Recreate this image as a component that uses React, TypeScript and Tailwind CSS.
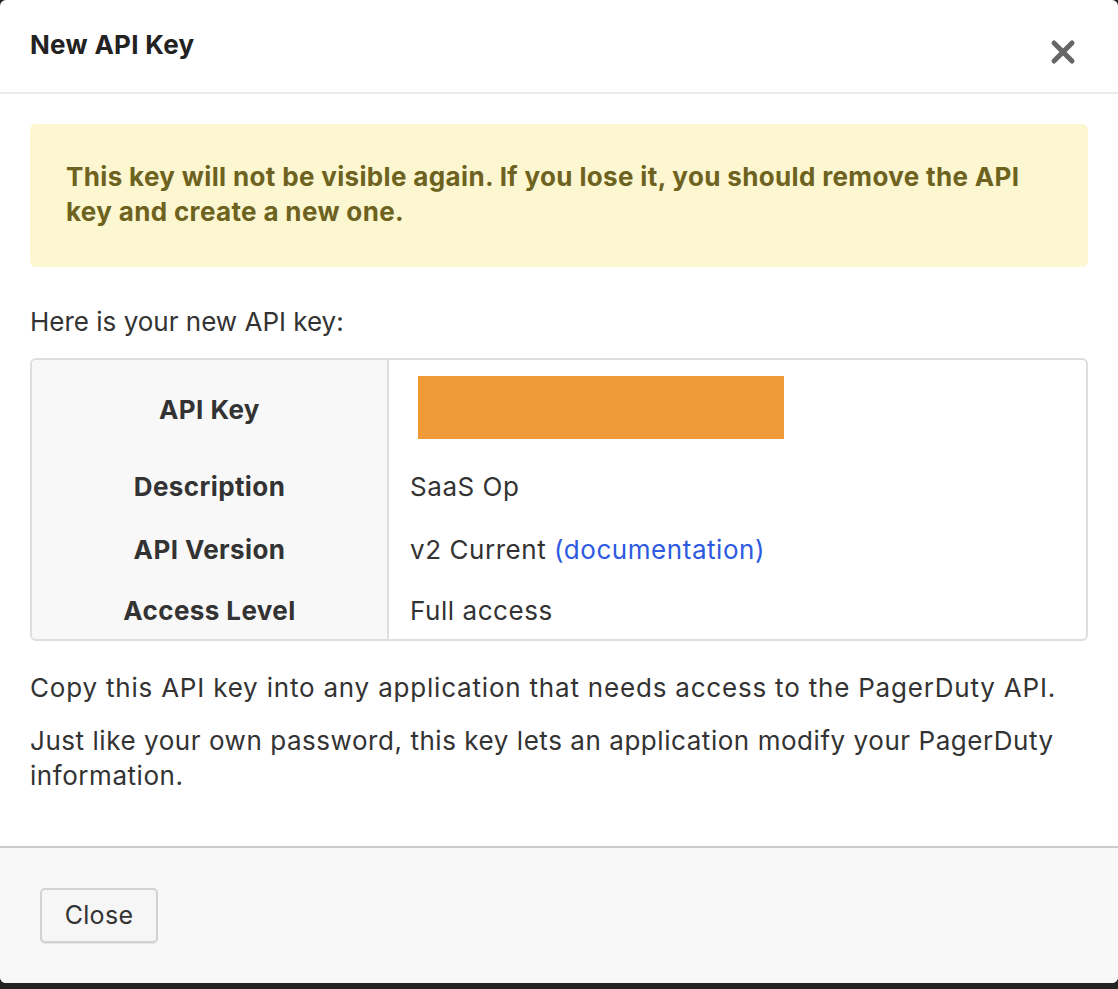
import React from "react";

export default function App() {
  const font = { fontFamily: "Inter, 'Noto Sans', sans-serif" };
  return (
    <div className="w-[1118px] h-[989px] bg-[#232323] overflow-hidden" style={font}>
      <div className="h-[983px] bg-white rounded-[6px] flex flex-col overflow-hidden">
        {/* Header */}
        <div className="h-[94px] border-b-2 border-[#ebebeb] flex items-center justify-between pl-[30px] pr-[42px] shrink-0">
          <h1 className="text-[26px] font-bold text-[#222] tracking-[0.3px] -mt-[4px]">New API Key</h1>
          <svg width="26" height="26" viewBox="0 0 26 26" className="mt-[12px]">
            <path d="M4 4 L22 22 M22 4 L4 22" stroke="#666" strokeWidth="5" strokeLinecap="round" />
          </svg>
        </div>

        {/* Body */}
        <div className="px-[30px] pt-[30px] flex-1 text-[#333] text-[26px] tracking-[0.55px] leading-[35px]">
          <div className="bg-[#fcf7d0] rounded-[6px] h-[143px] px-[36px] pt-[35px]">
            <p className="font-bold text-[#6e6220] text-[26px] tracking-[0.35px]">
              This key will not be visible again. If you lose it, you should remove the API key and create a new one.
            </p>
          </div>

          <p className="mt-[37px] tracking-[0px]">Here is your new API key:</p>

          <div className="mt-[19px] border-2 border-[#dedede] rounded-[6px] overflow-hidden">
            <div className="grid grid-cols-[357px_1fr]">
              <div className="bg-[#f8f8f8] border-r-2 border-[#dedede] font-bold text-[#333] text-center tracking-[0.4px]">
                <div className="h-[94px] flex items-center justify-center pt-[4px]">API Key</div>
                <div className="h-[64px] flex items-center justify-center">Description</div>
                <div className="h-[63px] flex items-center justify-center">API Version</div>
                <div className="h-[58px] flex items-center justify-center">Access Level</div>
              </div>
              <div className="pl-[21px]">
                <div className="h-[94px] pt-[16px] pl-[8px]">
                  <div className="w-[366px] h-[63px] bg-[#ef9937]" />
                </div>
                <div className="h-[64px] flex items-center">SaaS Op</div>
                <div className="h-[63px] flex items-center">
                  v2 Current&nbsp;<span className="text-[#2d5ae0]">(documentation)</span>
                </div>
                <div className="h-[58px] flex items-center">Full access</div>
              </div>
            </div>
          </div>

          <p className="mt-[29px] tracking-[0.8px]">Copy this API key into any application that needs access to the PagerDuty API.</p>
          <p className="mt-[18px]">
            Just like your own password, this key lets an application modify your PagerDuty information.
          </p>
        </div>

        {/* Footer */}
        <div className="h-[137px] border-t-2 border-[#cccccc] bg-[#f8f8f8] shrink-0 pl-[40px] pt-[40px]">
          <button className="w-[118px] h-[55px] rounded-[5px] border-2 border-[#d2d2d2] bg-[#f6f6f6] text-[25px] tracking-[0.3px] text-[#333] shadow-[0_1px_1px_rgba(0,0,0,0.08)]">
            Close
          </button>
        </div>
      </div>
    </div>
  );
}
